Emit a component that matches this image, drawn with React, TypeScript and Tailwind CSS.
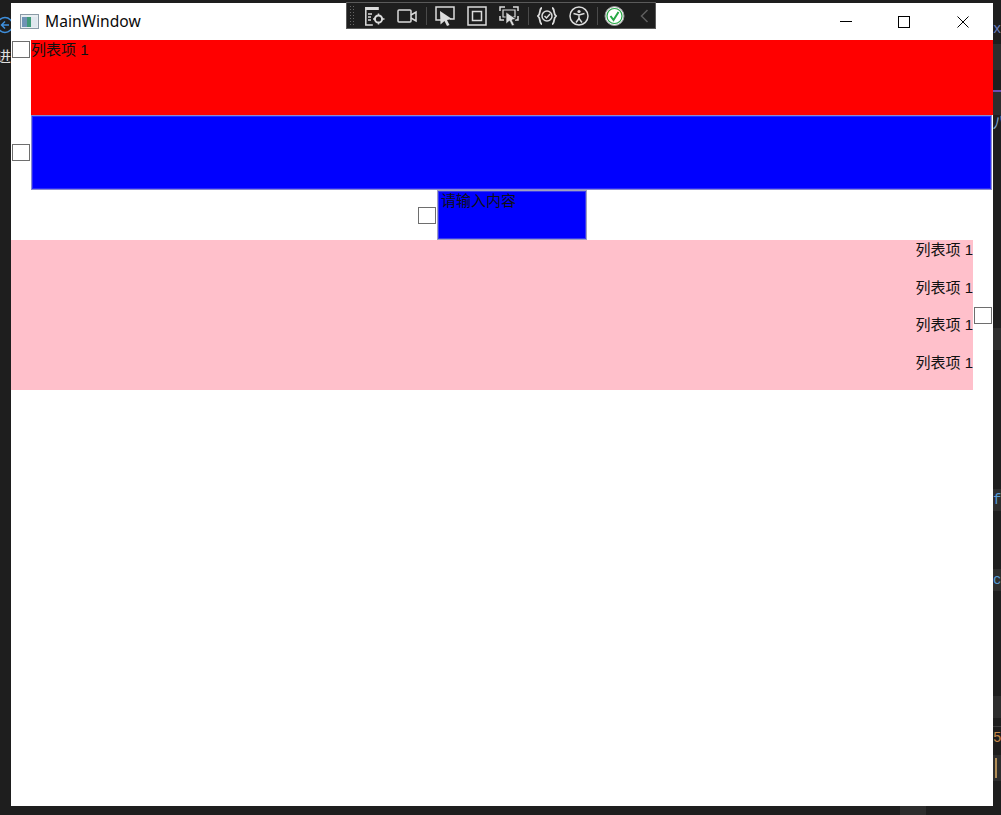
const Check = ({ className }: { className: string }) => (
  <div className={`w-[18px] h-[17px] bg-white border border-[#6e6e6e] shrink-0 ${className}`} />
);

const ToolIcon = ({ w = 20, children }: { w?: number; children: React.ReactNode }) => (
  <svg width={w} height="20" viewBox={`0 0 ${w} 20`} fill="none" stroke="#dcdcdc" strokeWidth="1.500" className="shrink-0">
    {children}
  </svg>
);

const Sep = () => <div className="w-px h-[18px] bg-[#4a4a4a] shrink-0" />;

const Toolbar = () => (
  <div className="absolute left-[346px] top-[2px] w-[310px] h-[27px] bg-[#1e1e1e] border border-[#5a5a5a] flex items-center">
    <div className="w-[7px] h-[22px] ml-[2px] shrink-0 bg-[radial-gradient(#666_1px,transparent_1px)] bg-[length:3px_3px]" />
    <div className="ml-[9px] flex items-center">
      <ToolIcon>
        <path d="M.8 2.500h13" strokeWidth="3" />
        <path d="M.8 1v18h7" />
        <path d="M3 8h4M3 11h3M3 14h3" />
        <circle cx="13.500" cy="13" r="3.600" strokeWidth="2" />
        <path d="M13.500 7.500v2M13.500 16.500v2M8 13h2M17 13h2.500" />
      </ToolIcon>
    </div>
    <div className="ml-[12px] flex items-center">
      <ToolIcon>
        <rect x="1" y="4" width="13" height="12" rx="1" />
        <path d="M14 9l5-3v9l-5-3" />
      </ToolIcon>
    </div>
    <div className="ml-[9px]"><Sep /></div>
    <div className="ml-[8px] flex items-center">
      <ToolIcon>
        <path d="M6 14H1V1h18v12h-4" />
        <path d="M5 5l12 8-5 1 2.500 5-2.500 1-2.500-5-4 3.500z" fill="#dcdcdc" stroke="none" />
      </ToolIcon>
    </div>
    <div className="ml-[12px] flex items-center">
      <ToolIcon>
        <rect x="1" y="1" width="18" height="18" />
        <rect x="5.500" y="5.500" width="9" height="9" />
      </ToolIcon>
    </div>
    <div className="ml-[12px] flex items-center">
      <ToolIcon>
        <path d="M1 5V1h5M14 1h5v4M1 10v4h4M19 10v4h-3" />
        <path d="M4 4h12v7H4z" strokeWidth="1.200" />
        <path d="M7 6l10 7-4 1 2.500 5-2.500 1-2.500-5-3.500 3z" fill="#dcdcdc" stroke="#1e1e1e" strokeWidth=".7" />
      </ToolIcon>
    </div>
    <div className="ml-[9px]"><Sep /></div>
    <div className="ml-[8px] flex items-center">
      <ToolIcon>
        <path d="M5 2C2 2 4 8 1 10c3 2 1 8 4 8M15 2c3 0 1 6 4 8-3 2-1 8-4 8" strokeWidth="1.800" />
        <circle cx="10" cy="10" r="5" />
        <path d="M7.500 10l2 2 3.500-4" />
      </ToolIcon>
    </div>
    <div className="ml-[12px] flex items-center">
      <ToolIcon>
        <circle cx="10" cy="10" r="9" />
        <circle cx="10" cy="5.500" r="1.600" fill="#dcdcdc" stroke="none" />
        <path d="M4.500 7.500L10 9l5.500-1.500M10 9v3.500M10 12.500L7 16.500M10 12.500l3 4" />
      </ToolIcon>
    </div>
    <div className="ml-[8px]"><Sep /></div>
    <div className="ml-[6px] flex items-center">
      <ToolIcon w={21}>
        <circle cx="10.500" cy="10" r="9.500" fill="#f4f4f4" stroke="#9a9a9a" strokeWidth="1" />
        <circle cx="10.500" cy="10" r="7.500" fill="#fff" stroke="#27a844" strokeWidth="1.200" />
        <path d="M6.500 10l3 4 5-8" stroke="#27a844" strokeWidth="2" />
      </ToolIcon>
    </div>
    <div className="ml-[15px] flex items-center">
      <svg width="9" height="14" viewBox="0 0 9 14" fill="none" stroke="#5e5e5e" strokeWidth="1.500">
        <path d="M7.500 1L1.500 7l6 6" />
      </svg>
    </div>
  </div>
);

const TitleBar = () => (
  <div className="h-[37px] flex items-center shrink-0">
    <svg width="19" height="15" viewBox="0 0 19 15" className="ml-[9px] shrink-0">
      <rect x="0.500" y="0.500" width="18" height="14" fill="#e8eef2" stroke="#8a9aa6" />
      <rect x="2" y="3" width="5" height="10" fill="#6f93b5" />
      <rect x="7" y="3" width="4" height="10" fill="#3f9a78" />
      <rect x="11" y="3" width="6" height="10" fill="#dfe7ee" />
    </svg>
    <span className="ml-[6px] text-[15.600px] text-[#0a0a0a] font-['Noto_Sans',sans-serif]">MainWindow</span>
    <div className="ml-auto flex items-center">
      <svg width="12" height="12" viewBox="0 0 12 12" stroke="#000" fill="none" className="mr-[46px]">
        <path d="M0 5.500h12" />
      </svg>
      <svg width="12" height="12" viewBox="0 0 12 12" stroke="#000" fill="none" className="mr-[47px]">
        <rect x="0.500" y="0.500" width="11" height="11" />
      </svg>
      <svg width="12" height="12" viewBox="0 0 12 12" stroke="#000" fill="none" className="mr-[24px]">
        <path d="M.5.500l11 11M11.500.500l-11 11" />
      </svg>
    </div>
  </div>
);

const ListItem = () => (
  <div className="h-[37.500px] text-[15px] leading-[19px] text-right text-[#111]">列表项 1</div>
);

const RightGutter = () => (
  <div className="relative w-[8px] shrink-0 overflow-hidden text-[14px] text-[#569cd6] font-['Liberation_Mono',monospace]">
    <div className="absolute left-0 top-[41px] w-full h-[26px] bg-[#2d2d2d]" />
    <div className="absolute left-0 top-[87px] w-full h-[25px] bg-[#2d2d2d]">
      <div className="w-full h-[2px] bg-[#6a4fb0]" />
    </div>
    <span className="absolute left-0 top-[16px] leading-[20px] text-[#6a7fc0]">x</span>
    <span className="absolute left-0 top-[112px] leading-[16px] text-[#7fa8d0]">八</span>
    <div className="absolute left-0 top-[325px] w-full h-[22px] bg-[#2d2d2d]" />
    <div className="absolute left-0 top-[486px] w-full h-[22px] bg-[#2d2d2d] leading-[22px]">f</div>
    <div className="absolute left-0 top-[566px] w-full h-[22px] bg-[#2d2d2d] leading-[22px]">c</div>
    <div className="absolute left-0 top-[693px] w-full h-[22px] bg-[#2d2d2d]" />
    <div className="absolute left-0 top-[723px] w-full h-px bg-[#3c3c3c]" />
    <span className="absolute left-0 top-[727px] leading-[16px] text-[#c68a4a]">5</span>
    <div className="absolute left-0 top-[752px] w-full h-[26px] bg-[#2d2d2d]">
      <div className="absolute left-[2px] top-[3px] w-[2px] h-[20px] bg-[#b08d57]" />
    </div>
  </div>
);

const LeftGutter = () => (
  <div className="relative w-[11px] shrink-0 overflow-hidden">
    <svg width="20" height="20" viewBox="0 0 20 20" fill="none" stroke="#3f8fdc" strokeWidth="1.500" className="absolute left-[-3px] top-[12px]">
      <circle cx="8" cy="10" r="7.500" />
      <path d="M12 10H5M8 6.500L4.500 10 8 13.500" />
    </svg>
    <span className="absolute left-[-4px] top-[44px] text-[15px] leading-[20px] text-[#e0e0e0]">进</span>
  </div>
);

export default function App() {
  return (
    <div className="relative w-[1001px] h-[815px] bg-[#1e1e1e] overflow-hidden font-['Liberation_Sans','Noto_Sans_CJK_SC',sans-serif]">
      <div className="flex h-full pt-[3px] pb-[9px]">
        <LeftGutter />
        <div className="w-[982px] bg-white flex flex-col">
          <TitleBar />
          {/* first row */}
          <div className="flex h-[75px]">
            <Check className="ml-px mt-px" />
            <div className="ml-px flex-1 bg-[#ff0000] text-[15px] leading-[19px] text-[#111]">列表项 1</div>
          </div>
          {/* second row */}
          <div className="flex items-center h-[75px]">
            <Check className="ml-px" />
            <div className="ml-px w-[961px] h-[75px] bg-[#0000ff] border border-[#8a8ad0] shadow-[inset_0_0_0_1px_#2a2afa]" />
          </div>
          {/* centered row */}
          <div className="flex items-center justify-center h-[50px] pl-px">
            <Check className="mr-px" />
            <div className="w-[150px] h-[50px] bg-[#0000ff] border border-[#a0a0c0] shadow-[inset_0_0_0_1px_#3a3af0] pl-[3px] text-[15px] leading-[19px] text-[#111]">
              请输入内容
            </div>
          </div>
          {/* pink list */}
          <div className="flex items-center h-[150px]">
            <div className="w-[962px] h-[150px] bg-[#ffc0cb]">
              <ListItem />
              <ListItem />
              <ListItem />
              <ListItem />
            </div>
            <Check className="ml-px" />
          </div>
        </div>
        <RightGutter />
      </div>
      <div className="absolute left-[900px] top-[806px] w-[26px] h-[9px] bg-[#2d2d2d]" />
      <Toolbar />
    </div>
  );
}
